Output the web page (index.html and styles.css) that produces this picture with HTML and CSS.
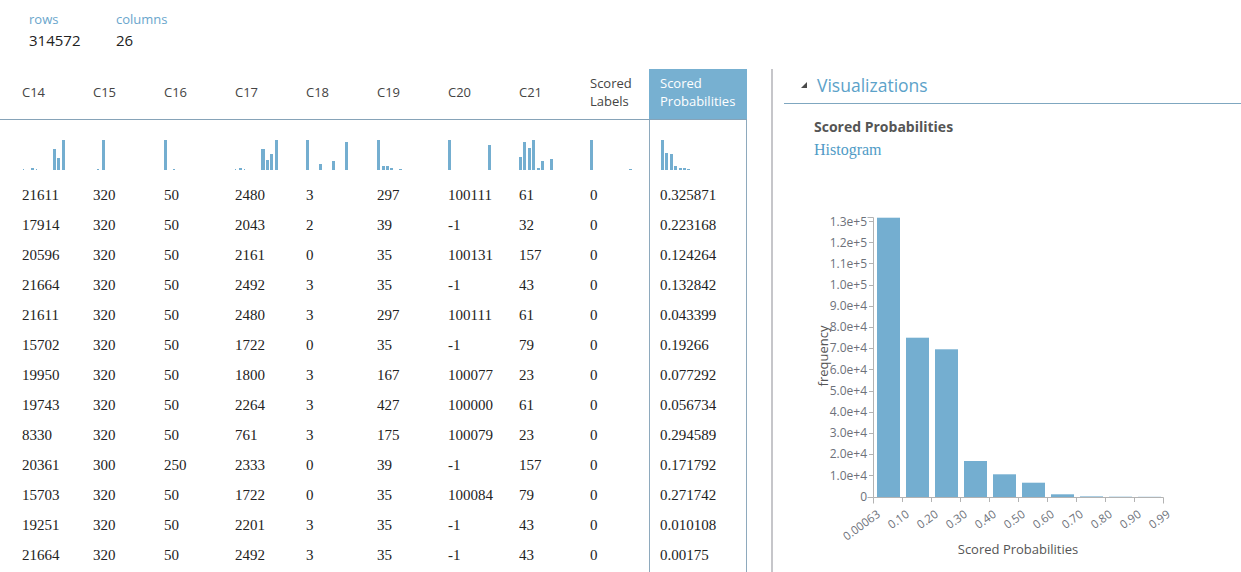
FILE: index.html
```html
<!DOCTYPE html>
<html>
<head>
<meta charset="utf-8">
<title>Scored dataset</title>
<link rel="stylesheet" href="styles.css">
</head>
<body>
<div class="page">
  <div class="stats">
    <div class="stat stat-rows">
      <div class="stat-label">rows</div>
      <div class="stat-value">314572</div>
    </div>
    <div class="stat">
      <div class="stat-label">columns</div>
      <div class="stat-value">26</div>
    </div>
  </div>
  <div class="main">
    <div class="grid-panel">
      <div class="row head">
        <div class="cell">C14</div>
        <div class="cell">C15</div>
        <div class="cell">C16</div>
        <div class="cell">C17</div>
        <div class="cell">C18</div>
        <div class="cell">C19</div>
        <div class="cell">C20</div>
        <div class="cell">C21</div>
        <div class="cell">Scored<br>Labels</div>
        <div class="cell sel">Scored<br>Probabilities</div>
      </div>
      <div class="row hist">
        <div class="cell"><svg class="mini" viewBox="0 0 71 60"><rect x="13" y="49" width="1" height="1"/><rect x="21" y="48" width="3" height="2"/><rect x="26" y="49" width="1" height="1"/><rect x="43" y="29" width="3" height="21"/><rect x="47" y="38" width="3" height="12"/><rect x="52" y="20" width="3" height="30"/></svg></div>
        <div class="cell"><svg class="mini" viewBox="0 0 71 60"><rect x="16" y="49" width="2" height="1"/><rect x="21" y="20" width="3" height="30"/></svg></div>
        <div class="cell"><svg class="mini" viewBox="0 0 71 60"><rect x="12" y="20" width="3" height="30"/><rect x="21" y="49" width="2" height="1"/></svg></div>
        <div class="cell"><svg class="mini" viewBox="0 0 71 60"><rect x="12" y="49" width="1" height="1"/><rect x="16" y="48" width="3" height="2"/><rect x="21" y="49" width="1" height="1"/><rect x="38" y="29" width="4" height="21"/><rect x="43" y="40" width="3" height="10"/><rect x="47" y="34" width="3" height="16"/><rect x="52" y="20" width="3" height="30"/></svg></div>
        <div class="cell"><svg class="mini" viewBox="0 0 71 60"><rect x="12" y="20" width="3" height="30"/><rect x="25" y="44" width="3" height="6"/><rect x="38" y="41" width="3" height="9"/><rect x="51" y="22" width="3" height="28"/></svg></div>
        <div class="cell"><svg class="mini" viewBox="0 0 71 60"><rect x="12" y="20" width="3" height="30"/><rect x="17" y="46" width="3" height="4"/><rect x="21" y="46" width="3" height="4"/><rect x="25" y="48" width="3" height="2"/><rect x="34" y="49" width="3" height="1"/></svg></div>
        <div class="cell"><svg class="mini" viewBox="0 0 71 60"><rect x="12" y="20" width="3" height="30"/><rect x="52" y="25" width="3" height="25"/></svg></div>
        <div class="cell"><svg class="mini" viewBox="0 0 71 60"><rect x="12" y="37" width="3" height="13"/><rect x="16" y="22" width="3" height="28"/><rect x="21" y="28" width="3" height="22"/><rect x="25" y="20" width="3" height="30"/><rect x="30" y="48" width="3" height="2"/><rect x="34" y="41" width="3" height="9"/><rect x="43" y="39" width="3" height="11"/></svg></div>
        <div class="cell"><svg class="mini" viewBox="0 0 71 60"><rect x="12" y="20" width="3" height="30"/><rect x="51" y="49" width="3" height="1"/></svg></div>
        <div class="cell sel"><svg class="mini" viewBox="0 0 71 60"><rect x="11" y="20" width="3" height="30"/><rect x="15" y="33" width="3" height="17"/><rect x="20" y="34" width="3" height="16"/><rect x="24" y="46" width="3" height="4"/><rect x="29" y="48" width="3" height="2"/><rect x="33" y="48" width="3" height="2"/><rect x="37" y="49" width="3" height="1"/></svg></div>
      </div>
      <div class="row data"><div class="cell">21611</div><div class="cell">320</div><div class="cell">50</div><div class="cell">2480</div><div class="cell">3</div><div class="cell">297</div><div class="cell">100111</div><div class="cell">61</div><div class="cell">0</div><div class="cell sel">0.325871</div></div>
      <div class="row data"><div class="cell">17914</div><div class="cell">320</div><div class="cell">50</div><div class="cell">2043</div><div class="cell">2</div><div class="cell">39</div><div class="cell">-1</div><div class="cell">32</div><div class="cell">0</div><div class="cell sel">0.223168</div></div>
      <div class="row data"><div class="cell">20596</div><div class="cell">320</div><div class="cell">50</div><div class="cell">2161</div><div class="cell">0</div><div class="cell">35</div><div class="cell">100131</div><div class="cell">157</div><div class="cell">0</div><div class="cell sel">0.124264</div></div>
      <div class="row data"><div class="cell">21664</div><div class="cell">320</div><div class="cell">50</div><div class="cell">2492</div><div class="cell">3</div><div class="cell">35</div><div class="cell">-1</div><div class="cell">43</div><div class="cell">0</div><div class="cell sel">0.132842</div></div>
      <div class="row data"><div class="cell">21611</div><div class="cell">320</div><div class="cell">50</div><div class="cell">2480</div><div class="cell">3</div><div class="cell">297</div><div class="cell">100111</div><div class="cell">61</div><div class="cell">0</div><div class="cell sel">0.043399</div></div>
      <div class="row data"><div class="cell">15702</div><div class="cell">320</div><div class="cell">50</div><div class="cell">1722</div><div class="cell">0</div><div class="cell">35</div><div class="cell">-1</div><div class="cell">79</div><div class="cell">0</div><div class="cell sel">0.19266</div></div>
      <div class="row data"><div class="cell">19950</div><div class="cell">320</div><div class="cell">50</div><div class="cell">1800</div><div class="cell">3</div><div class="cell">167</div><div class="cell">100077</div><div class="cell">23</div><div class="cell">0</div><div class="cell sel">0.077292</div></div>
      <div class="row data"><div class="cell">19743</div><div class="cell">320</div><div class="cell">50</div><div class="cell">2264</div><div class="cell">3</div><div class="cell">427</div><div class="cell">100000</div><div class="cell">61</div><div class="cell">0</div><div class="cell sel">0.056734</div></div>
      <div class="row data"><div class="cell">8330</div><div class="cell">320</div><div class="cell">50</div><div class="cell">761</div><div class="cell">3</div><div class="cell">175</div><div class="cell">100079</div><div class="cell">23</div><div class="cell">0</div><div class="cell sel">0.294589</div></div>
      <div class="row data"><div class="cell">20361</div><div class="cell">300</div><div class="cell">250</div><div class="cell">2333</div><div class="cell">0</div><div class="cell">39</div><div class="cell">-1</div><div class="cell">157</div><div class="cell">0</div><div class="cell sel">0.171792</div></div>
      <div class="row data"><div class="cell">15703</div><div class="cell">320</div><div class="cell">50</div><div class="cell">1722</div><div class="cell">0</div><div class="cell">35</div><div class="cell">100084</div><div class="cell">79</div><div class="cell">0</div><div class="cell sel">0.271742</div></div>
      <div class="row data"><div class="cell">19251</div><div class="cell">320</div><div class="cell">50</div><div class="cell">2201</div><div class="cell">3</div><div class="cell">35</div><div class="cell">-1</div><div class="cell">43</div><div class="cell">0</div><div class="cell sel">0.010108</div></div>
      <div class="row data"><div class="cell">21664</div><div class="cell">320</div><div class="cell">50</div><div class="cell">2492</div><div class="cell">3</div><div class="cell">35</div><div class="cell">-1</div><div class="cell">43</div><div class="cell">0</div><div class="cell sel">0.00175</div></div>
      <div class="row filler"><div class="cell"></div><div class="cell"></div><div class="cell"></div><div class="cell"></div><div class="cell"></div><div class="cell"></div><div class="cell"></div><div class="cell"></div><div class="cell"></div><div class="cell sel"></div></div>
    </div>

    <div class="viz-panel">
      <div class="viz-head">
        <svg class="caret" width="6" height="6" viewBox="0 0 6 6"><polygon points="0,6 6,6 6,0"/></svg>
        <span class="viz-title">Visualizations</span>
      </div>
      <div class="viz-body">
        <div class="viz-name">Scored Probabilities</div>
        <a class="viz-link">Histogram</a>
      </div>
      <svg class="chart" width="420" height="380" viewBox="0 0 420 380">
        <g class="bars">
          <rect x="77" y="26.7" width="23" height="279.3"/>
          <rect x="106" y="146.7" width="23" height="159.3"/>
          <rect x="135" y="158.3" width="23" height="147.7"/>
          <rect x="164" y="270" width="23" height="36"/>
          <rect x="193" y="283.3" width="23" height="22.7"/>
          <rect x="222" y="291.7" width="23" height="14.3"/>
          <rect x="251" y="303.3" width="23" height="2.7"/>
          <rect x="280" y="305.4" width="23" height="0.6"/>
          <rect x="309" y="305.7" width="23" height="0.3"/>
          <rect x="338" y="305.8" width="23" height="0.2"/>
        </g>
        <g class="axis">
          <path d="M67.5,26.5H73.5V306.5H67.5"/>
          <path d="M69,30.5H73.5M69,51.5H73.5M69,72.5H73.5M69,94.5H73.5M69,115.5H73.5M69,136.5H73.5M69,157.5H73.5M69,178.5H73.5M69,200.5H73.5M69,221.5H73.5M69,242.5H73.5M69,263.5H73.5M69,284.5H73.5"/>
          <path d="M73.5,312.5V306.5H363.5V312.5"/>
          <path d="M102.5,306.5V311M131.5,306.5V311M160.5,306.5V311M189.5,306.5V311M218.5,306.5V311M247.5,306.5V311M276.5,306.5V311M305.5,306.5V311M334.5,306.5V311"/>
        </g>
        <g class="ylab">
          <text x="67" y="34.5">1.3e+5</text>
          <text x="67" y="55.5">1.2e+5</text>
          <text x="67" y="76.5">1.1e+5</text>
          <text x="67" y="98">1.0e+5</text>
          <text x="67" y="119">9.0e+4</text>
          <text x="67" y="140">8.0e+4</text>
          <text x="67" y="161">7.0e+4</text>
          <text x="67" y="182.5">6.0e+4</text>
          <text x="67" y="204">5.0e+4</text>
          <text x="67" y="225">4.0e+4</text>
          <text x="67" y="246">3.0e+4</text>
          <text x="67" y="267">2.0e+4</text>
          <text x="67" y="288.5">1.0e+4</text>
          <text x="67" y="310">0</text>
        </g>
        <g class="xlab">
          <text transform="translate(81,325) rotate(-36)">0.00063</text>
          <text transform="translate(110,325) rotate(-36)">0.10</text>
          <text transform="translate(139,325) rotate(-36)">0.20</text>
          <text transform="translate(168,325) rotate(-36)">0.30</text>
          <text transform="translate(197,325) rotate(-36)">0.40</text>
          <text transform="translate(226,325) rotate(-36)">0.50</text>
          <text transform="translate(255,325) rotate(-36)">0.60</text>
          <text transform="translate(284,325) rotate(-36)">0.70</text>
          <text transform="translate(313,325) rotate(-36)">0.80</text>
          <text transform="translate(342,325) rotate(-36)">0.90</text>
          <text transform="translate(371,325) rotate(-36)">0.99</text>
        </g>
        <text class="ytitle" transform="translate(28,165) rotate(-90)">frequency</text>
        <text class="xtitle" x="218" y="363">Scored Probabilities</text>
      </svg>
    </div>
  </div>
</div>
</body>
</html>
```

FILE: styles.css
```css
html, body {
  margin: 0;
  padding: 0;
  background: #ffffff;
}

body {
  font-family: "Open Sans", "Noto Sans", sans-serif;
  color: #333333;
  overflow: hidden;
}

.page {
  height: 572px;
  display: flex;
  flex-direction: column;
}

/* ---- summary stats ---- */
.stats {
  height: 69px;
  box-sizing: border-box;
  padding: 10px 0 0 29px;
  display: flex;
  flex-shrink: 0;
}

.stat-rows {
  width: 87px;
}

.stat-label {
  font-size: 13px;
  line-height: 18px;
  color: #6aa6cc;
}

.stat-value {
  margin-top: 1px;
  font-size: 15px;
  line-height: 22px;
  color: #222222;
}

/* ---- main split ---- */
.main {
  flex: 1;
  display: flex;
  min-height: 0;
}

.grid-panel {
  width: 771px;
  flex-shrink: 0;
  display: flex;
  flex-direction: column;
  align-items: flex-start;
}

.row {
  display: grid;
  grid-template-columns: repeat(9, 71px) 98px;
  padding-left: 10px;
}

.cell {
  box-sizing: border-box;
  padding-left: 12px;
  white-space: nowrap;
}

.cell.sel {
  padding-left: 10px;
  border-left: 1px solid #8ea9bd;
  border-right: 1px solid #8ea9bd;
}

.head {
  border-bottom: 1px solid #86a3b8;
}

.head .cell {
  height: 50px;
  display: flex;
  align-items: center;
  font-size: 13px;
  line-height: 18px;
  color: #444444;
  padding-bottom: 4px;
}

.head .cell.sel {
  background: #77b0d1;
  border-color: #77b0d1;
  color: #ffffff;
}

.hist .cell {
  height: 60px;
  padding-left: 0;
}

.mini {
  display: block;
  width: 71px;
  height: 60px;
  fill: #74aed0;
}

.data .cell {
  height: 30px;
  line-height: 30px;
  font-family: "Liberation Serif", "Times New Roman", serif;
  font-size: 15px;
  color: #222222;
}

.filler {
  flex: 1;
}

/* ---- visualization panel ---- */
.viz-panel {
  flex: 1;
  border-left: 2px solid #c6c6ca;
  padding-left: 11px;
  min-width: 0;
}

.viz-head {
  height: 35px;
  box-sizing: border-box;
  padding-bottom: 3px;
  display: flex;
  align-items: center;
  border-bottom: 1px solid #7fa7c0;
}

.caret {
  margin-left: 17px;
  fill: #4a4a4a;
}

.viz-title {
  margin-left: 10px;
  font-size: 17.5px;
  color: #5ca2c9;
}

.viz-body {
  padding-left: 30px;
  padding-top: 13px;
}

.viz-name {
  font-weight: 700;
  font-size: 14px;
  line-height: 20px;
  color: #555555;
}

.viz-link {
  display: block;
  margin-top: 2px;
  font-family: "Liberation Serif", "Times New Roman", serif;
  font-size: 16px;
  line-height: 22px;
  color: #4f9bc6;
}

.chart {
  display: block;
  margin: 30px 0 0 16px;
  font-family: "Open Sans", "Noto Sans", sans-serif;
}

.bars rect {
  fill: #74aed0;
}

.axis path {
  fill: none;
  stroke: #b3b3b3;
  stroke-width: 1;
}

.ylab text {
  font-size: 12px;
  fill: #6d717a;
  text-anchor: end;
}

.xlab text {
  font-size: 11.5px;
  fill: #6d717a;
  text-anchor: end;
}

.ytitle {
  font-size: 13px;
  fill: #555555;
  text-anchor: middle;
}

.xtitle {
  font-size: 13px;
  fill: #555555;
  text-anchor: middle;
}
```
